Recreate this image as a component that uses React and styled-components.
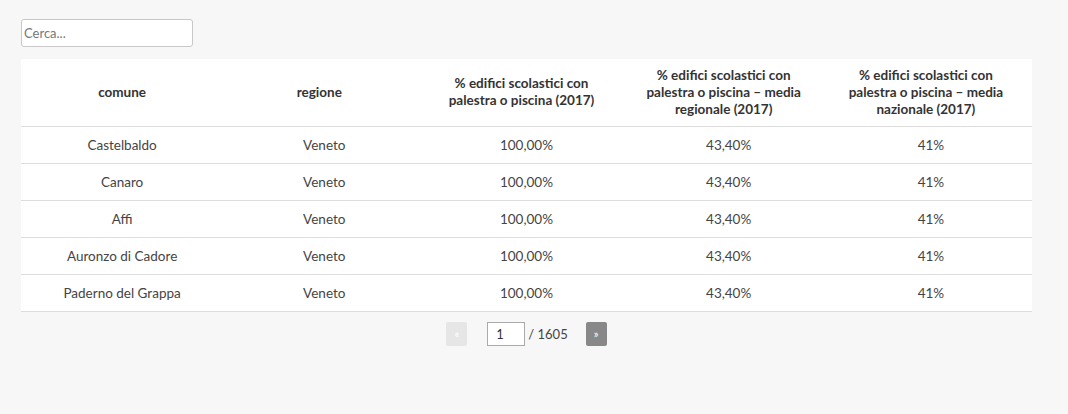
import React, { useState } from 'react';
import styled, { createGlobalStyle } from 'styled-components';

const GlobalStyle = createGlobalStyle`
    html, body {
        margin: 0;
        padding: 0;
        background: #f7f7f7;
        font-family: Lato, "Open Sans", sans-serif;
        color: #444;
    }
`;

const Page = styled.div`
    padding: 19px 36px 40px 21px;
    min-height: 414px;
    box-sizing: border-box;
`;

const SearchInput = styled.input`
    width: 172px;
    height: 28px;
    box-sizing: border-box;
    border: 1px solid #c8c8c8;
    border-radius: 3px;
    padding: 0 2px;
    font-family: inherit;
    font-size: 13px;
    color: #444;
    background: #fff;
    margin-bottom: 12px;
    display: block;

    &::placeholder {
        color: #777;
    }
`;

const Table = styled.table`
    width: 1011px;
    border-collapse: collapse;
    table-layout: fixed;
    background: #fff;
    font-size: 13.5px;
`;

const Th = styled.th`
    box-sizing: border-box;
    height: 67px;
    padding: 0 ${p => (p.$first ? 20 : 26)}px 0 ${p => (p.$first ? 20 : 16)}px;
    font-weight: 700;
    color: #333;
    line-height: 17px;
    text-align: center;
    vertical-align: middle;
    border-bottom: 1px solid #ddd;
`;

const Td = styled.td`
    height: 36px;
    padding: 0 10px;
    text-align: center;
    color: #444;
    border-bottom: 1px solid #ddd;
`;

const Pager = styled.div`
    display: flex;
    align-items: center;
    justify-content: center;
    margin-top: 10px;
    width: 1011px;
    font-size: 13px;
    color: #444;
`;

const PageButton = styled.button`
    width: 21px;
    height: 24px;
    border: none;
    border-radius: 2px;
    padding: 0;
    font-family: inherit;
    font-size: 11px;
    background: ${p => (p.disabled ? '#e6e6e6' : '#888')};
    color: #fff;
    cursor: ${p => (p.disabled ? 'default' : 'pointer')};
`;

const PageInput = styled.input`
    width: 38px;
    height: 24px;
    box-sizing: border-box;
    margin: 0 3px 0 20px;
    border: 1px solid #aaa;
    padding: 0 8px;
    font-family: inherit;
    font-size: 13px;
    color: #333;
`;

const PageTotal = styled.span`
    margin-right: 18px;
`;

const columns = [
    'comune',
    'regione',
    '% edifici scolastici con palestra o piscina (2017)',
    '% edifici scolastici con palestra o piscina – media regionale (2017)',
    '% edifici scolastici con palestra o piscina – media nazionale (2017)',
];

const rows = [
    ['Castelbaldo', 'Veneto', '100,00%', '43,40%', '41%'],
    ['Canaro', 'Veneto', '100,00%', '43,40%', '41%'],
    ['Affi', 'Veneto', '100,00%', '43,40%', '41%'],
    ['Auronzo di Cadore', 'Veneto', '100,00%', '43,40%', '41%'],
    ['Paderno del Grappa', 'Veneto', '100,00%', '43,40%', '41%'],
];

export default function App() {
    const [page, setPage] = useState(1);

    return (
        <Page>
            <GlobalStyle />
            <SearchInput placeholder="Cerca..." />
            <Table>
                <thead>
                    <tr>
                        {columns.map((c, i) => (
                            <Th key={c} $first={i === 0}>{c}</Th>
                        ))}
                    </tr>
                </thead>
                <tbody>
                    {rows.map(r => (
                        <tr key={r[0]}>
                            {r.map((v, i) => (
                                <Td key={i}>{v}</Td>
                            ))}
                        </tr>
                    ))}
                </tbody>
            </Table>
            <Pager>
                <PageButton disabled={page <= 1} onClick={() => setPage(page - 1)}>«</PageButton>
                <PageInput value={page} onChange={e => setPage(Number(e.target.value) || 1)} />
                <PageTotal>/ 1605</PageTotal>
                <PageButton onClick={() => setPage(page + 1)}>»</PageButton>
            </Pager>
        </Page>
    );
}
